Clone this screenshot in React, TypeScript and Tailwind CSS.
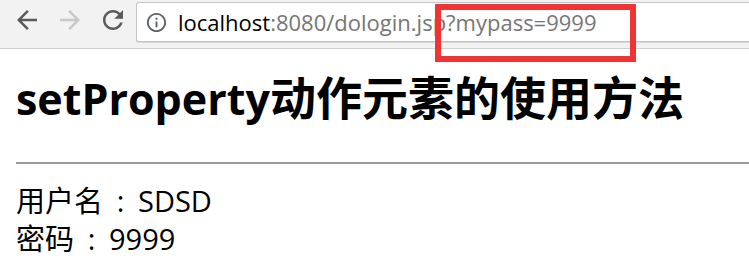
import React from 'react';

const BackIcon = ({ className }: { className?: string }) => (
  <svg viewBox="0 0 24 24" className={className} fill="currentColor">
    <path d="M20 11H7.83l5.59-5.59L12 4l-8 8 8 8 1.41-1.41L7.83 13H20v-2z" />
  </svg>
);

const ForwardIcon = ({ className }: { className?: string }) => (
  <svg viewBox="0 0 24 24" className={className} fill="currentColor">
    <path d="M4 11h12.17l-5.59-5.59L12 4l8 8-8 8-1.41-1.41L16.17 13H4v-2z" />
  </svg>
);

const ReloadIcon = ({ className }: { className?: string }) => (
  <svg viewBox="0 0 24 24" className={className} fill="currentColor">
    <path d="M17.65 6.35C16.2 4.9 14.21 4 12 4c-4.42 0-7.99 3.58-7.99 8s3.57 8 7.99 8c3.73 0 6.84-2.55 7.73-6h-2.08c-.82 2.33-3.04 4-5.65 4-3.31 0-6-2.69-6-6s2.69-6 6-6c1.66 0 3.14.69 4.22 1.78L13 11h7V4l-2.35 2.35z" />
  </svg>
);

const InfoIcon = ({ className }: { className?: string }) => (
  <svg viewBox="0 0 24 24" className={className} fill="currentColor">
    <path d="M11 7h2v2h-2zm0 4h2v6h-2zm1-9C6.48 2 2 6.48 2 12s4.48 10 10 10 10-4.48 10-10S17.52 2 12 2zm0 18c-4.41 0-8-3.59-8-8s3.59-8 8-8 8 3.59 8 8-3.59 8-8 8z" />
  </svg>
);

// full-width colon with the dots centred in its cell
const Colon = () => <span className="inline-block w-[35px] text-center">:</span>;

export default function App() {
  return (
    <div className="relative w-[749px] h-[268px] overflow-hidden bg-white font-['Open_Sans','Noto_Sans_CJK_SC',sans-serif] text-black">
      {/* Browser toolbar */}
      <div className="flex h-[49px] items-start bg-[#f2f2f2] border-b border-[#cfcfcf]">
        <div className="flex items-center h-[40px] pl-[12px]">
          <BackIcon className="w-[30px] h-[30px] text-[#5a5a5a]" />
          <ForwardIcon className="w-[30px] h-[30px] ml-[13px] text-[#c8c8c8]" />
          <ReloadIcon className="w-[30px] h-[30px] ml-[13px] text-[#5a5a5a]" />
        </div>
        <div className="flex flex-1 items-center h-[40px] mt-[2px] ml-[8px] bg-white border border-r-0 border-[#c4c4c4] rounded-l-[3px] shadow-[0_1px_0_#d8d8d8]">
          <InfoIcon className="w-[23px] h-[23px] ml-[8px] text-[#5f6368]" />
          <span className="ml-[10px] text-[22px] leading-none">
            localhost<span className="text-[#767676]">:8080/dologin.jsp?mypass=9999</span>
          </span>
        </div>
      </div>

      {/* Page content */}
      <div className="px-4">
        <h1 className="mt-[24px] font-bold leading-[48px] whitespace-nowrap">
          <span className="text-[43px]">setProperty</span>
          <span className="text-[46px]">动作元素的使用方法</span>
        </h1>
        <div className="mt-[29px] h-[2px] bg-[#9b9b9b] -mr-4" />
        <div className="mt-[18px] text-[29px] leading-[38px]">
          <div>用户名<Colon />SDSD</div>
          <div>密码<Colon />9999</div>
        </div>
      </div>

      {/* Annotation highlight */}
      <div className="absolute left-[435px] top-[4px] w-[201px] h-[58px] border-[6px] border-[#ee3434]" />
    </div>
  );
}
